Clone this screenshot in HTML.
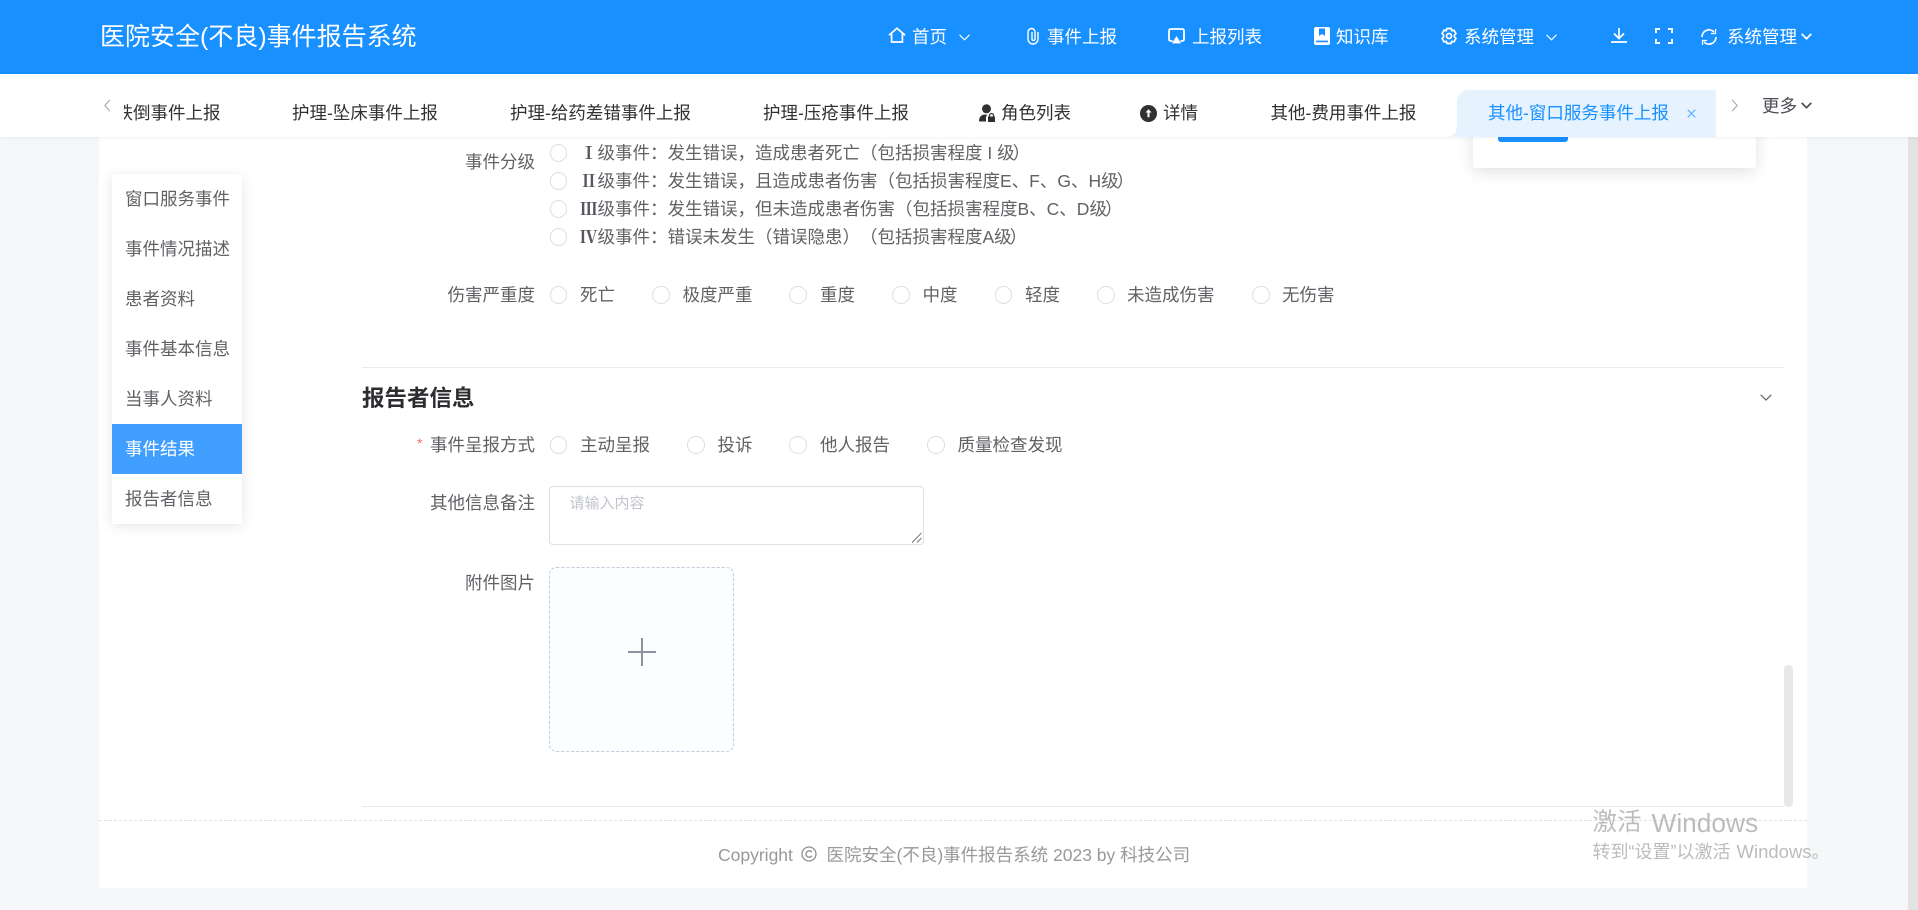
<!DOCTYPE html>
<html lang="zh-CN">
<head>
<meta charset="utf-8">
<title>医院安全(不良)事件报告系统</title>
<style>
html,body{margin:0;padding:0;width:1918px;height:910px;overflow:hidden;background:#f5f7f9;}
body{position:relative;font-family:"Liberation Sans","Noto Sans CJK SC",sans-serif;font-size:17.5px;color:#606266;text-spacing-trim:space-all;}
.a{position:absolute;}
.t{position:absolute;white-space:nowrap;line-height:24px;height:24px;}
.w{color:#fff;}
.d{color:#303133;}
.r{position:absolute;width:17.5px;height:17.5px;box-sizing:border-box;border:1px solid #dcdfe6;border-radius:50%;background:#fff;}
.l{position:absolute;right:1383px;white-space:nowrap;line-height:24px;height:24px;text-align:right;}
.n{position:absolute;left:580px;width:17.5px;text-align:center;white-space:nowrap;line-height:24px;height:24px;font-family:"Noto Serif CJK SC",serif;font-weight:700;color:#55585e;}
.e{position:relative;left:-2px;}
svg{position:absolute;display:block;overflow:visible;}
.m{position:absolute;left:112px;width:130px;height:50px;line-height:50px;padding-left:13px;box-sizing:border-box;white-space:nowrap;}
</style>
</head>
<body>

<!-- main panel -->
<div class="a" style="left:99px;top:137px;width:1708px;height:751px;background:#fff;"></div>

<!-- page scrollbar strip -->
<div class="a" style="left:1908px;top:137px;width:10px;height:773px;background:#e2e3e5;"></div>

<!-- header -->
<div class="a" style="left:0;top:0;width:1918px;height:74px;background:#1890ff;"></div>
<div class="t w" style="left:100px;top:21px;font-size:25px;line-height:32px;height:32px;">医院安全(不良)事件报告系统</div>

<svg style="left:888px;top:27px" width="18" height="16" viewBox="0 0 18 16" fill="none" stroke="#fff" stroke-width="1.7"><path d="M1 8.2L9 1.2l8 7M3.6 6.6V15h10.8V6.6"/></svg>
<div class="t w" style="left:912px;top:25px;">首页</div>
<svg style="left:959px;top:34px" width="11" height="7" viewBox="0 0 11 7" fill="none" stroke="#fff" stroke-width="1.1"><path d="M.5.8l5 5 5-5"/></svg>

<svg style="left:1025px;top:27px" width="16" height="18" viewBox="0 0 16 18" fill="none" stroke="#fff" stroke-width="1.4"><path d="M7 5V12a1.500 1.500 0 0 0 3 0V5a3.500 3.500 0 0 0-7 0V12a5 5 0 0 0 10 0V5"/></svg>
<div class="t w" style="left:1047px;top:25px;">事件上报</div>

<svg style="left:1168px;top:28px" width="17" height="16" viewBox="0 0 17 16"><path d="M4.500 13H2.600A1.600 1.600 0 0 1 1 11.400V2.600A1.600 1.600 0 0 1 2.600 1h11.800A1.600 1.600 0 0 1 16 2.600v8.800a1.600 1.600 0 0 1-1.600 1.600h-1.900" fill="none" stroke="#fff" stroke-width="1.800"/><path d="M8.500 8l4.600 7.400H3.900z" fill="#fff"/></svg>
<div class="t w" style="left:1192px;top:25px;">上报列表</div>

<svg style="left:1314px;top:27px" width="16" height="18" viewBox="0 0 16 18"><path d="M2 0h12a2 2 0 0 1 2 2v14a2 2 0 0 1-2 2H2a2 2 0 0 1-2-2V2a2 2 0 0 1 2-2z" fill="#fff"/><path d="M5 1.500h6v7.500L8 7 5 9zM2 13.600h12v1.600H2z" fill="#1890ff"/></svg>
<div class="t w" style="left:1336px;top:25px;">知识库</div>

<svg style="left:1440px;top:27px" width="18" height="18" viewBox="0 0 18 18" fill="none" stroke="#fff" stroke-width="1.700"><path d="M7 1.500h4l.7 2.100 2.200-.5 2 3.400L14.400 8.200v1.600l1.500 1.700-2 3.400-2.200-.5-.7 2.100H7l-.7-2.100-2.200.5-2-3.400L3.600 9.800V8.200L2.100 6.500l2-3.400 2.200.5z"/><circle cx="9" cy="9" r="2.500"/></svg>
<div class="t w" style="left:1464px;top:25px;">系统管理</div>
<svg style="left:1546px;top:34px" width="11" height="7" viewBox="0 0 11 7" fill="none" stroke="#fff" stroke-width="1.1"><path d="M.5.8l5 5 5-5"/></svg>

<svg style="left:1611px;top:28px" width="16" height="15" viewBox="0 0 16 15" fill="none" stroke="#fff" stroke-width="1.700"><path d="M8 0v10M3 5.500l5 5 5-5M0 14h16"/></svg>
<svg style="left:1655px;top:28px" width="18" height="16" viewBox="0 0 18 16" fill="none" stroke="#fff" stroke-width="1.900"><path d="M1 5V1h4M13 1h4v4M17 11v4h-4M5 15H1v-4"/></svg>
<svg style="left:1700px;top:28px" width="18" height="18" viewBox="0 0 18 18" fill="none" stroke="#fff" stroke-width="1.700"><path d="M2 9a7 7 0 0 1 12-5M16 9a7 7 0 0 1-12 5"/><path d="M15.500 1v4.500H11M2.500 17v-4.500H7" stroke-width="1.200"/></svg>
<div class="t w" style="left:1727px;top:25px;">系统管理</div>
<svg style="left:1801px;top:33px" width="11" height="7" viewBox="0 0 11 7" fill="none" stroke="#fff" stroke-width="1.800"><path d="M.7.900l4.800 4.800 4.800-4.800"/></svg>

<!-- popup behind tabs -->
<div class="a" style="left:1473px;top:120px;width:283px;height:48px;background:#fff;border-radius:3px;box-shadow:0 4px 16px rgba(0,0,0,.12);"></div>
<div class="a" style="left:1498px;top:120px;width:70px;height:22px;background:#1890ff;border-radius:3px;"></div>

<!-- tab bar -->
<div class="a" style="left:0;top:74px;width:1918px;height:63px;background:#fff;box-shadow:0 1px 4px rgba(0,21,41,.06);"></div>
<svg style="left:104px;top:99px" width="7" height="13" viewBox="0 0 7 13" fill="none" stroke="#9aa0aa" stroke-width="1"><path d="M6 .8L.8 6.500 6 12.200"/></svg>
<div class="a" style="left:124px;top:90px;width:100px;height:47px;overflow:hidden;">
  <div class="t d" style="right:3.500px;top:11px;">跌倒事件上报</div>
</div>
<div class="t d" style="left:292px;top:101px;">护理-坠床事件上报</div>
<div class="t d" style="left:510px;top:101px;">护理-给药差错事件上报</div>
<div class="t d" style="left:763px;top:101px;">护理-压疮事件上报</div>

<svg style="left:979px;top:104px" width="16" height="18" viewBox="0 0 16 18"><circle cx="7.500" cy="4.800" r="4.500" fill="#303133"/><path d="M0 17.500c0-4.500 2-7 6.500-7 .8 0 1.500.1 2 .3-1 .8-1.500 1.700-1.500 2.700v4z" fill="#303133"/><path d="M9 12.500h7V18H9z" fill="#303133"/><path d="M10.500 12.500v-1a2 2 0 0 1 4 0v1" fill="none" stroke="#303133" stroke-width="1.200"/></svg>
<div class="t d" style="left:1001px;top:101px;">角色列表</div>

<svg style="left:1140px;top:105px" width="17" height="17" viewBox="0 0 17 17"><circle cx="8.500" cy="8.500" r="8.500" fill="#303133"/><path d="M8.500 4.300l3 3.200H9.500v4.800h-2V7.500H5.500z" fill="#fff"/></svg>
<div class="t d" style="left:1163px;top:101px;">详情</div>
<div class="t d" style="left:1270.500px;top:101px;">其他-费用事件上报</div>

<!-- active tab -->
<svg style="left:1446px;top:90px" width="270" height="47" viewBox="0 0 270 47"><path d="M0 47c6 0 11-4 11-11V12C11 5 16 0 23 0h247v47z" fill="#e6f3ff"/></svg>
<div class="t" style="left:1488px;top:101px;color:#1890ff;">其他-窗口服务事件上报</div>
<svg style="left:1687px;top:109px" width="9" height="9" viewBox="0 0 9 9" fill="none" stroke="#5aaeff" stroke-width="1.100"><path d="M.7.700l7.600 7.600M8.300.700L.7 8.300"/></svg>
<svg style="left:1731px;top:99px" width="7" height="13" viewBox="0 0 7 13" fill="none" stroke="#9aa0aa" stroke-width="1"><path d="M1 .8l5.200 5.700L1 12.200"/></svg>
<div class="t" style="left:1762px;top:94px;color:#4a4d52;">更多</div>
<svg style="left:1801px;top:102px" width="11" height="7" viewBox="0 0 11 7" fill="none" stroke="#4a4d52" stroke-width="1.700"><path d="M.7.900l4.800 4.800 4.800-4.800"/></svg>

<!-- side menu -->
<div class="a" style="left:112px;top:174px;width:130px;height:350px;background:#fff;box-shadow:0 2px 12px rgba(0,0,0,.1);"></div>
<div class="m" style="top:174px;">窗口服务事件</div>
<div class="m" style="top:224px;">事件情况描述</div>
<div class="m" style="top:274px;">患者资料</div>
<div class="m" style="top:324px;">事件基本信息</div>
<div class="m" style="top:374px;">当事人资料</div>
<div class="m" style="top:424px;background:#409eff;color:#fff;">事件结果</div>
<div class="m" style="top:474px;">报告者信息</div>

<!-- 事件分级 -->
<div class="l" style="top:150px;">事件分级</div>
<div class="r" style="left:549.500px;top:144px;"></div>
<div class="n" style="top:141px;">Ⅰ</div>
<div class="t" style="left:597.500px;top:141px;">级事件：发生错误，造成患者死亡（包括损害程度 I 级<span class="e">）</span></div>
<div class="r" style="left:549.500px;top:172px;"></div>
<div class="n" style="top:169px;">Ⅱ</div>
<div class="t" style="left:597.500px;top:169px;">级事件：发生错误，且造成患者伤害（包括损害程度E、F、G、H级<span class="e">）</span></div>
<div class="r" style="left:549.500px;top:200px;"></div>
<div class="n" style="top:197px;">Ⅲ</div>
<div class="t" style="left:597.500px;top:197px;">级事件：发生错误，但未造成患者伤害（包括损害程度B、C、D级<span class="e">）</span></div>
<div class="r" style="left:549.500px;top:228px;"></div>
<div class="n" style="top:225px;">Ⅳ</div>
<div class="t" style="left:597.500px;top:225px;">级事件：错误未发生（错误隐患）（包括损害程度A级<span class="e">）</span></div>

<!-- 伤害严重度 -->
<div class="l" style="top:283px;">伤害严重度</div>
<div class="r" style="left:549.500px;top:286px;"></div><div class="t" style="left:580px;top:283px;">死亡</div>
<div class="r" style="left:652px;top:286px;"></div><div class="t" style="left:682.500px;top:283px;">极度严重</div>
<div class="r" style="left:789px;top:286px;"></div><div class="t" style="left:820px;top:283px;">重度</div>
<div class="r" style="left:892px;top:286px;"></div><div class="t" style="left:922.500px;top:283px;">中度</div>
<div class="r" style="left:994.500px;top:286px;"></div><div class="t" style="left:1025px;top:283px;">轻度</div>
<div class="r" style="left:1097px;top:286px;"></div><div class="t" style="left:1127px;top:283px;">未造成伤害</div>
<div class="r" style="left:1252px;top:286px;"></div><div class="t" style="left:1282px;top:283px;">无伤害</div>

<!-- section -->
<div class="a" style="left:362px;top:367px;width:1422px;height:1px;background:#e8eaf0;"></div>
<div class="t" style="left:362px;top:385px;font-size:22.500px;font-weight:bold;color:#2b2d30;line-height:28px;height:28px;">报告者信息</div>
<svg style="left:1760px;top:394px" width="12" height="7" viewBox="0 0 12 7" fill="none" stroke="#606266" stroke-width="1.200"><path d="M.7.800L6 6l5.300-5.200"/></svg>

<div class="t" style="left:417px;top:431px;color:#f56c6c;font-size:14px;">*</div>
<div class="l" style="top:433px;">事件呈报方式</div>
<div class="r" style="left:549.500px;top:436px;"></div><div class="t" style="left:580px;top:433px;">主动呈报</div>
<div class="r" style="left:687px;top:436px;"></div><div class="t" style="left:717.500px;top:433px;">投诉</div>
<div class="r" style="left:789px;top:436px;"></div><div class="t" style="left:820px;top:433px;">他人报告</div>
<div class="r" style="left:927px;top:436px;"></div><div class="t" style="left:957.500px;top:433px;">质量检查发现</div>

<div class="l" style="top:491px;">其他信息备注</div>
<div class="a" style="left:549px;top:486px;width:375px;height:59px;box-sizing:border-box;border:1px solid #dcdfe6;border-radius:4px;background:#fff;"></div>
<div class="t" style="left:569.500px;top:492px;font-size:15px;color:#c0c4cc;">请输入内容</div>
<svg style="left:911px;top:532px" width="11" height="11" viewBox="0 0 11 11" fill="none" stroke="#777" stroke-width="1"><path d="M1 10.500L10.500 1M6 10.500l4.500-4.500"/></svg>

<div class="l" style="top:571px;">附件图片</div>
<div class="a" style="left:549px;top:567px;width:185px;height:185px;box-sizing:border-box;border:1px dashed #c0ccda;border-radius:7.500px;background:#fbfdff;"></div>
<div class="a" style="left:627.500px;top:651px;width:28px;height:2px;background:#8c939d;"></div>
<div class="a" style="left:640.500px;top:638px;width:2px;height:28px;background:#8c939d;"></div>

<!-- inner scrollbar and bottom line -->
<div class="a" style="left:362px;top:806px;width:1422px;height:1px;background:#e8eaf0;"></div>
<div class="a" style="left:1784px;top:665px;width:9px;height:142px;background:#e8e8e8;border-radius:4px;"></div>

<!-- footer -->
<div class="a" style="left:99px;top:820px;width:1708px;border-top:1px dashed #dcdfe6;"></div>
<div class="t" style="left:718px;top:843px;color:#999;">Copyright</div>
<svg style="left:801px;top:846px" width="16" height="16" viewBox="0 0 16 16" fill="none" stroke="#8f8f8f" stroke-width="1.300"><circle cx="8" cy="8" r="7"/><path d="M10.800 6.200a3.200 3.200 0 1 0 0 3.600"/></svg>
<div class="t" style="left:826.500px;top:843px;color:#999;">医院安全(不良)事件报告系统 2023 by 科技公司</div>

<!-- windows watermark -->
<div class="t" style="left:1592.500px;top:808px;font-size:24.500px;line-height:30px;height:30px;color:#bcbcbc;">激活</div>
<div class="t" style="left:1651.500px;top:808px;font-size:26.300px;line-height:30px;height:30px;color:#bcbcbc;">Windows</div>
<div class="t" style="left:1592.500px;top:840px;font-size:18px;color:#bcbcbc;">转到“设置”以激活</div>
<div class="t" style="left:1736.500px;top:840px;font-size:18.500px;color:#bcbcbc;">Windows。</div>

</body>
</html>
